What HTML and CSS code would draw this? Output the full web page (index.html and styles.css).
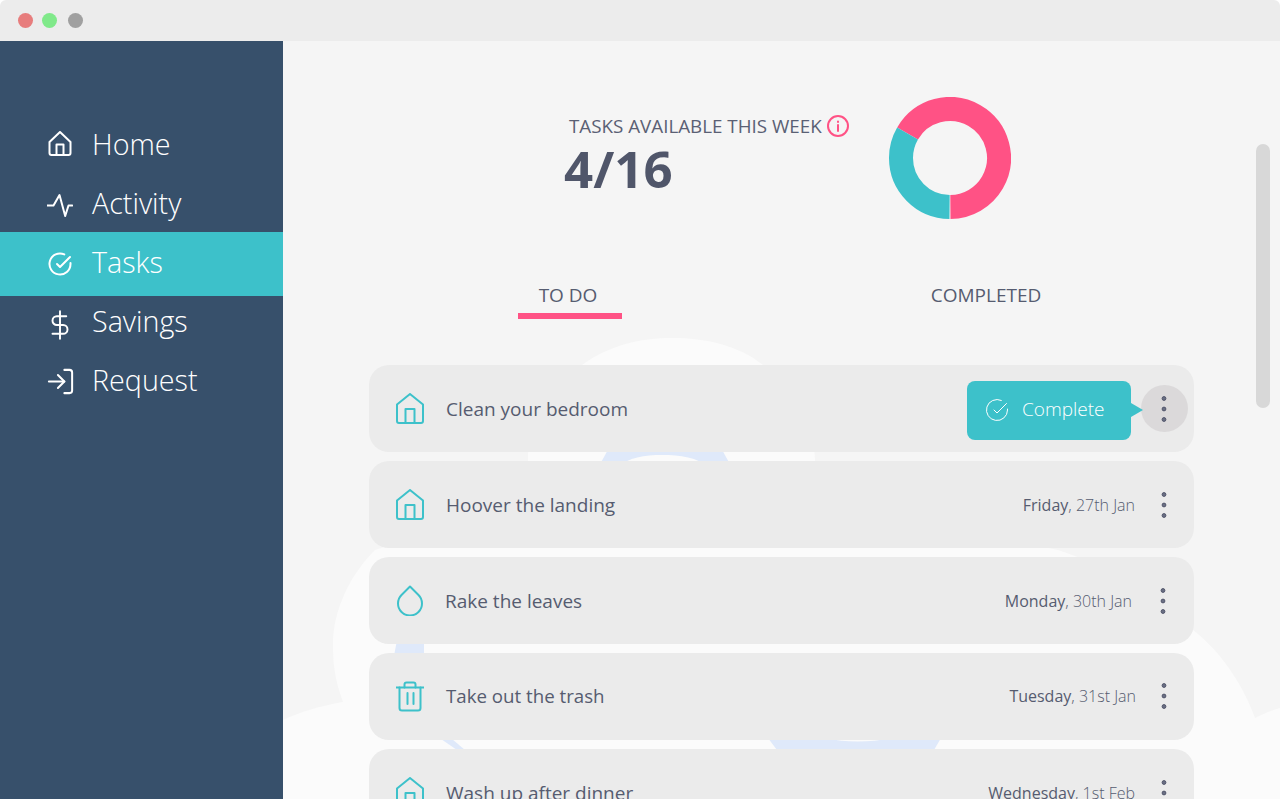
FILE: index.html
```html
<!DOCTYPE html>
<html lang="en">
<head>
<meta charset="utf-8">
<title>Tasks</title>
<link rel="stylesheet" href="styles.css">
</head>
<body>
<div class="window">
  <header class="titlebar">
    <span class="light light-red"></span>
    <span class="light light-green"></span>
    <span class="light light-grey"></span>
  </header>
  <div class="app">
    <nav class="sidebar">
      <a class="nav-item">
        <span class="nav-icon nav-icon-high"><svg class="ico" width="24" height="25" viewBox="0 0 24 25"><path d="M1.500 11 12 1l10.500 10v11a2 2 0 0 1-2 2h-17a2 2 0 0 1-2-2z"/><path d="M8.500 24V13.500h7V24"/></svg></span>
        <span class="nav-label">Home</span>
      </a>
      <a class="nav-item">
        <span class="nav-icon"><svg class="ico" width="26" height="24" viewBox="0 0 26 24"><path d="M.5 12.500h6l6-10.500 5.700 21 3.300-10.500h3.700"/></svg></span>
        <span class="nav-label">Activity</span>
      </a>
      <a class="nav-item nav-item-active">
        <span class="nav-icon"><svg class="ico" width="24" height="24" viewBox="0 0 24 24"><path d="M22.500 11.080V12a10.500 10.500 0 1 1-6.200-9.600"/><path d="M22 5 12 15l-3-3"/></svg></span>
        <span class="nav-label">Tasks</span>
      </a>
      <a class="nav-item">
        <span class="nav-icon nav-icon-low"><svg class="ico ico-thin" width="30" height="30" viewBox="0 0 24 24"><path d="M12 1v22"/><path d="M17 5H9.500a3.500 3.500 0 0 0 0 7h5a3.500 3.500 0 0 1 0 7H6"/></svg></span>
        <span class="nav-label">Savings</span>
      </a>
      <a class="nav-item">
        <span class="nav-icon"><svg class="ico ico-thin" width="31" height="31" viewBox="0 0 24 24"><path d="M15 3h4a2 2 0 0 1 2 2v14a2 2 0 0 1-2 2h-4"/><path d="m10 17 5-5-5-5"/><path d="M15 12H3"/></svg></span>
        <span class="nav-label">Request</span>
      </a>
    </nav>
    <main class="main">
      <svg class="backdrop" width="997" height="758" viewBox="283 41 997 758" aria-hidden="true">
        <path class="cloud" d="M283 799V720C300 712 320 706 343 702C335 680 333 665 333 645C333 610 350 575 375 550L528 500V457C528 430 545 392 582 365C610 345 640 338 672 338C705 338 738 345 763 365C800 392 815 430 815 460V500L1058 550C1120 570 1170 610 1193 630C1225 655 1245 690 1255 718C1265 713 1272 710 1280 708V799Z"/>
        <path class="blob" d="M598 468L610 446H720L732 468H708C698 457 680 455 662 455C645 455 628 457 618 468Z"/>
        <path class="blob" d="M397 640H424V656H394Z"/>
        <path class="blob" d="M441 739H452L465 750H457Z"/>
        <path class="blob" d="M768 738H825Q857 745 892 738H941L934 750H777Z"/>
      </svg>

      <section class="hero">
        <div class="hero-text">
          <h1 class="hero-title">TASKS AVAILABLE THIS WEEK
            <svg class="info" width="22" height="22" viewBox="0 0 22 22"><circle cx="11" cy="11" r="10"/><path d="M11 10v6"/><path d="M11 6.500v.5"/></svg>
          </h1>
          <div class="hero-count">4/16</div>
        </div>
        <svg class="donut" width="122" height="122" viewBox="0 0 122 122">
          <circle class="donut-pink" cx="61" cy="61" r="49" pathLength="360" stroke-dasharray="239.500 120.500" transform="rotate(210 61 61)"/>
          <circle class="donut-teal" cx="61" cy="61" r="49" pathLength="360" stroke-dasharray="119.500 240.500" transform="rotate(90.500 61 61)"/>
        </svg>
      </section>

      <div class="tabs">
        <div class="tab tab-active">TO DO</div>
        <div class="tab">COMPLETED</div>
      </div>

      <ul class="rows">
        <li class="row">
          <svg class="row-ico" width="28" height="31" viewBox="0 0 28 31"><path d="M1 11.500 14 1l13 10.500V28a2 2 0 0 1-2 2H3a2 2 0 0 1-2-2z"/><path d="M9.500 30V16h9v14"/></svg>
          <span class="row-name">Clean your bedroom</span>
          <button class="complete">
            <svg class="complete-ico" width="24" height="24" viewBox="0 0 24 24"><path d="M22.500 11.080V12a10.500 10.500 0 1 1-6.200-9.600"/><path d="M21.500 5.500 12 15l-3-3"/></svg>
            <span>Complete</span>
          </button>
          <span class="more more-on"><svg class="dots" width="8" height="28" viewBox="0 0 8 28"><circle cx="4" cy="3.500" r="1.900"/><circle cx="4" cy="14" r="1.900"/><circle cx="4" cy="24.500" r="1.900"/></svg></span>
        </li>
        <li class="row">
          <svg class="row-ico" width="28" height="31" viewBox="0 0 28 31"><path d="M1 11.500 14 1l13 10.500V28a2 2 0 0 1-2 2H3a2 2 0 0 1-2-2z"/><path d="M9.500 30V16h9v14"/></svg>
          <span class="row-name">Hoover the landing</span>
          <span class="row-date"><b>Friday</b>, 27th Jan</span>
          <span class="more"><svg class="dots" width="8" height="28" viewBox="0 0 8 28"><circle cx="4" cy="3.500" r="1.900"/><circle cx="4" cy="14" r="1.900"/><circle cx="4" cy="24.500" r="1.900"/></svg></span>
        </li>
        <li class="row row-nudged">
          <svg class="row-ico" width="28" height="31" viewBox="0 0 28 31"><path d="M14 1.500 22.500 10a12 12 0 1 1-17 0z"/></svg>
          <span class="row-name">Rake the leaves</span>
          <span class="row-date"><b>Monday</b>, 30th Jan</span>
          <span class="more"><svg class="dots" width="8" height="28" viewBox="0 0 8 28"><circle cx="4" cy="3.500" r="1.900"/><circle cx="4" cy="14" r="1.900"/><circle cx="4" cy="24.500" r="1.900"/></svg></span>
        </li>
        <li class="row row-tight">
          <svg class="row-ico" width="28" height="31" viewBox="0 0 28 31"><path d="M.5 6.500h27"/><path d="M3.500 6.500V27A2.500 2.500 0 0 0 6 29.500h16a2.500 2.500 0 0 0 2.500-2.500V6.500"/><path d="M8.500 6.500v-3a2 2 0 0 1 2-2h7a2 2 0 0 1 2 2v3"/><path d="M11.500 12v11"/><path d="M17.500 12v11"/></svg>
          <span class="row-name">Take out the trash</span>
          <span class="row-date"><b>Tuesday</b>, 31st Jan</span>
          <span class="more"><svg class="dots" width="8" height="28" viewBox="0 0 8 28"><circle cx="4" cy="3.500" r="1.900"/><circle cx="4" cy="14" r="1.900"/><circle cx="4" cy="24.500" r="1.900"/></svg></span>
        </li>
        <li class="row">
          <svg class="row-ico" width="28" height="31" viewBox="0 0 28 31"><path d="M1 11.500 14 1l13 10.500V28a2 2 0 0 1-2 2H3a2 2 0 0 1-2-2z"/><path d="M9.500 30V16h9v14"/></svg>
          <span class="row-name">Wash up after dinner</span>
          <span class="row-date"><b>Wednesday</b>, 1st Feb</span>
          <span class="more"><svg class="dots" width="8" height="28" viewBox="0 0 8 28"><circle cx="4" cy="3.500" r="1.900"/><circle cx="4" cy="14" r="1.900"/><circle cx="4" cy="24.500" r="1.900"/></svg></span>
        </li>
      </ul>

      <div class="scrollbar"></div>
    </main>
  </div>
</div>
</body>
</html>
```
FILE: styles.css
```css
* {
  box-sizing: border-box;
}

html,
body {
  margin: 0;
  height: 799px;
  overflow: hidden;
  background: #fff;
}

body {
  font-family: "Open Sans", sans-serif;
  color: #565c70;
}

.window {
  height: 799px;
  display: flex;
  flex-direction: column;
  border-radius: 6px 6px 0 0;
  overflow: hidden;
}

.titlebar {
  flex: 0 0 41px;
  background: #ececec;
  display: flex;
  align-items: center;
  padding: 0 0 0 18px;
}

.light {
  width: 15px;
  height: 15px;
  border-radius: 50%;
}

.light-red {
  background: #e77d7d;
}

.light-green {
  background: #80e98a;
  margin-left: 9px;
}

.light-grey {
  background: #a0a0a0;
  margin-left: 11px;
}

.app {
  flex: 1;
  display: flex;
  min-height: 0;
}

/* Sidebar */
.sidebar {
  flex: 0 0 283px;
  background: #37506b;
  padding-top: 75px;
}

.nav-item {
  height: 59px;
  display: flex;
  align-items: center;
  padding-left: 48px;
  color: #fff;
}

.nav-item-active {
  height: 64px;
  margin: -2px 0 -3px;
  background: #3dc1ca;
}

.nav-icon {
  flex: 0 0 24px;
  width: 24px;
  min-width: 0;
  height: 32px;
  display: flex;
  align-items: center;
  justify-content: center;
}

.nav-icon-low {
  margin-top: 5px;
}

.nav-icon-high {
  margin-bottom: 5px;
}

.nav-label {
  margin-left: 20px;
  padding-bottom: 4px;
  font-size: 28.700px;
  font-weight: 300;
  line-height: 40px;
}

.ico {
  flex: none;
  fill: none;
  stroke: #fff;
  stroke-width: 2;
  stroke-linecap: round;
  stroke-linejoin: round;
}

.ico-thin {
  stroke-width: 1.550;
}

/* Main column */
.main {
  flex: 1;
  position: relative;
  background: #f5f5f5;
  overflow: hidden;
  padding-top: 56px;
}

.backdrop {
  position: absolute;
  top: 0;
  left: 0;
}

.cloud {
  fill: #fbfbfb;
}

.blob {
  fill: #dfe9fa;
}

.hero {
  position: relative;
  display: flex;
  margin-left: 281px;
}

.hero-text {
  flex: 0 0 285px;
  min-width: 0;
  padding-top: 17px;
}

.hero-title {
  margin: 0 0 0 5px;
  font-size: 18.800px;
  font-weight: 400;
  line-height: 24px;
  white-space: nowrap;
  display: flex;
  align-items: center;
  gap: 5px;
  color: #5a6074;
}

.info {
  flex: none;
  fill: none;
  stroke: #ff5285;
  stroke-width: 2;
  stroke-linecap: round;
}

.hero-count {
  font-size: 51px;
  font-weight: 700;
  line-height: 60px;
  color: #50566a;
}

.donut {
  margin-left: 40px;
  fill: none;
  stroke-width: 24;
}

.donut-pink {
  stroke: #ff5285;
}

.donut-teal {
  stroke: #3dc1ca;
}

/* Tabs */
.tabs {
  position: relative;
  display: flex;
  gap: 312px;
  margin: 64px 0 46px 235px;
}

.tab {
  width: 104px;
  height: 36px;
  padding-bottom: 6px;
  border-bottom: 6px solid transparent;
  display: flex;
  justify-content: center;
  font-size: 19px;
  font-weight: 400;
  line-height: 24px;
  white-space: nowrap;
}

.tab-active {
  padding-right: 4px;
  border-bottom-color: #ff5285;
}

/* Task rows */
.rows {
  position: relative;
  list-style: none;
  margin: 0 0 0 86px;
  padding: 0;
  width: 825px;
  display: flex;
  flex-direction: column;
  gap: 9px;
}

.row {
  flex: 0 0 87px;
  display: flex;
  align-items: center;
  padding: 0 6px 0 27px;
  background: #ebebeb;
  border-radius: 20px;
}

.row-ico {
  flex: none;
  fill: none;
  stroke: #3dc1ca;
  stroke-width: 2;
  stroke-linecap: round;
  stroke-linejoin: round;
}

.row-name {
  flex: 1;
  margin-left: 22px;
  font-size: 19px;
  line-height: 26px;
}

.row-date {
  font-size: 16px;
  font-weight: 300;
  line-height: 22px;
  margin-right: 6px;
}

.row-date b {
  font-weight: 400;
}

.row-nudged .row-name {
  margin-left: 21px;
}

.row-nudged .row-date {
  margin-right: 8px;
}

.row-nudged .more {
  margin-right: 1px;
}

.row-tight .row-name {
  font-size: 18.700px;
  padding-bottom: 2px;
}

.row-tight .row-date {
  padding-bottom: 2px;
  margin-right: 5px;
}

.row-tight .more {
  padding-bottom: 2px;
}

.more {
  flex: 0 0 47px;
  height: 47px;
  padding-right: 1px;
  border-radius: 50%;
  display: flex;
  align-items: center;
  justify-content: center;
}

.more-on {
  background: #dbd9da;
}

.dots {
  fill: #6a6f84;
  stroke: #52566b;
  stroke-width: 1;
}

.complete {
  position: relative;
  width: 164px;
  height: 59px;
  margin: 4px 10px 0 0;
  padding: 0 0 3px 18px;
  border: 0;
  border-radius: 8px;
  background: #3dc1ca;
  color: #fff;
  display: flex;
  align-items: center;
  gap: 13px;
  font-family: inherit;
  font-size: 19px;
  font-weight: 300;
}

.complete::after {
  content: "";
  position: absolute;
  top: 22px;
  left: 100%;
  border-left: 12px solid #3dc1ca;
  border-top: 7px solid transparent;
  border-bottom: 7px solid transparent;
}

.complete-ico {
  flex: none;
  margin-top: 2px;
  fill: none;
  stroke: #fff;
  stroke-width: 1;
  stroke-linecap: round;
  stroke-linejoin: round;
}

.scrollbar {
  position: absolute;
  top: 103px;
  right: 10px;
  width: 14px;
  height: 264px;
  border-radius: 7px;
  background: #d8d8d8;
}
```
